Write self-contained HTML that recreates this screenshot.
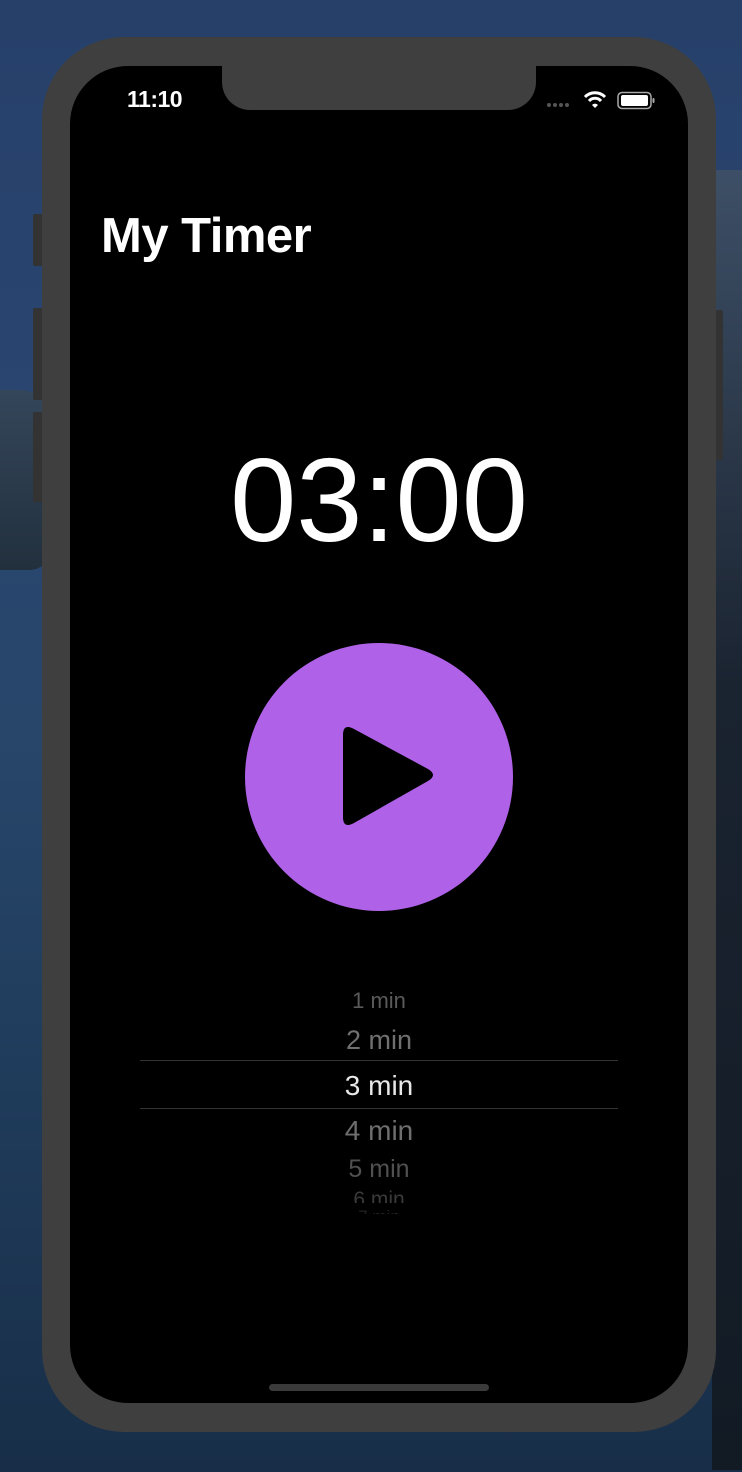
<!DOCTYPE html>
<html><head><meta charset="utf-8"><style>
html,body{margin:0;padding:0}
body{width:742px;height:1472px;position:relative;overflow:hidden;background:linear-gradient(180deg,#26406a 0%,#2a4670 30%,#27466a 50%,#1f3b5a 75%,#182e48 100%);font-family:"Liberation Sans",sans-serif}
.rock{position:absolute;left:0;top:390px;width:50px;height:180px;background:linear-gradient(180deg,#34465a,#22303e);border-radius:0 30px 20px 0}
.rock2{position:absolute;right:0;top:170px;width:30px;height:1300px;background:linear-gradient(180deg,#3d4f66,#1a2330 40%,#121a24)}
.phone{position:absolute;left:42px;top:37px;width:674px;height:1395px;background:#3f3f3f;border-radius:82px}
.btn{position:absolute;background:#333;border-radius:2px}
.screen{position:absolute;left:70px;top:66px;width:618px;height:1337px;background:#000;border-radius:58px;overflow:hidden}
.notch{position:absolute;left:152px;top:0;width:314px;height:44px;background:#3f3f3f;border-radius:0 0 28px 28px}
.time{position:absolute;left:57px;top:20px;color:#fff;font-size:23px;font-weight:bold;letter-spacing:-0.5px}
.title{position:absolute;left:31px;top:142px;color:#fff;font-size:49px;font-weight:bold;letter-spacing:-0.5px}
.big{position:absolute;left:0;width:618px;top:365px;text-align:center;color:#fff;font-size:119px;line-height:140px}
.play{position:absolute;left:175px;top:577px;width:268px;height:268px;border-radius:50%;background:#af62e8}
.pick{position:absolute;left:0;width:618px;text-align:center;color:#fff}
.line{position:absolute;left:70px;width:478px;height:1px;background:#333}
</style></head><body>
<div class="rock"></div><div class="rock2"></div>
<div class="btn" style="left:33px;top:214px;width:10px;height:52px"></div>
<div class="btn" style="left:33px;top:308px;width:10px;height:92px"></div>
<div class="btn" style="left:33px;top:412px;width:10px;height:90px"></div>
<div class="btn" style="left:715px;top:310px;width:8px;height:150px"></div>
<div class="phone"></div>
<div class="screen">
<div class="notch"></div>
<div class="time">11:10</div>
<svg style="position:absolute;left:476px;top:24px" width="110" height="22" viewBox="0 0 110 22">
<g fill="#555"><circle cx="3" cy="15" r="2"/><circle cx="9" cy="15" r="2"/><circle cx="15" cy="15" r="2"/><circle cx="21" cy="15" r="2"/></g>
<path d="M39 7 A14 14 0 0 1 59 7" stroke="#fff" stroke-width="3" fill="none"/>
<path d="M43 11 A8 8 0 0 1 55 11" stroke="#fff" stroke-width="3" fill="none"/>
<path d="M46 15 L49 18 L52 15 A4 4 0 0 0 46 15Z" fill="#fff"/>
<rect x="72" y="2.5" width="33" height="16" rx="4" fill="none" stroke="#aaa" stroke-width="1.5"/>
<rect x="75" y="5" width="27" height="11" rx="2" fill="#fff"/>
<rect x="106.5" y="8" width="2" height="5" rx="1" fill="#aaa"/>
</svg>
<div class="title">My Timer</div>
<div class="big">03:00</div>
<div class="play"><svg width="268" height="268" viewBox="0 0 268 268"><path d="M98 92 Q98 80 109 86 L183 126 Q193 132 183 138 L109 180 Q98 186 98 174 Z" fill="#000"/></svg></div>
<div class="pick" style="top:922px;font-size:22px;color:#5a5a5a">1 min</div>
<div class="pick" style="top:959px;font-size:27px;color:#707070">2 min</div>
<div class="line" style="top:994px"></div>
<div class="pick" style="top:1004px;font-size:28px;color:#e8e8e8">3 min</div>
<div class="line" style="top:1042px"></div>
<div class="pick" style="top:1049px;font-size:28px;color:#6e6e6e">4 min</div>
<div class="pick" style="top:1089px;font-size:25px;color:#505050">5 min</div>
<div class="pick" style="top:1122px;font-size:21px;color:#3a3a3a;height:15px;overflow:hidden">6 min</div>
<div class="pick" style="top:1141px;font-size:17px;color:#222;height:7px;overflow:hidden">7 min</div>
<div style="position:absolute;left:199px;top:1318px;width:220px;height:7px;border-radius:4px;background:#3a3a3a"></div>
</div>
</body></html>
